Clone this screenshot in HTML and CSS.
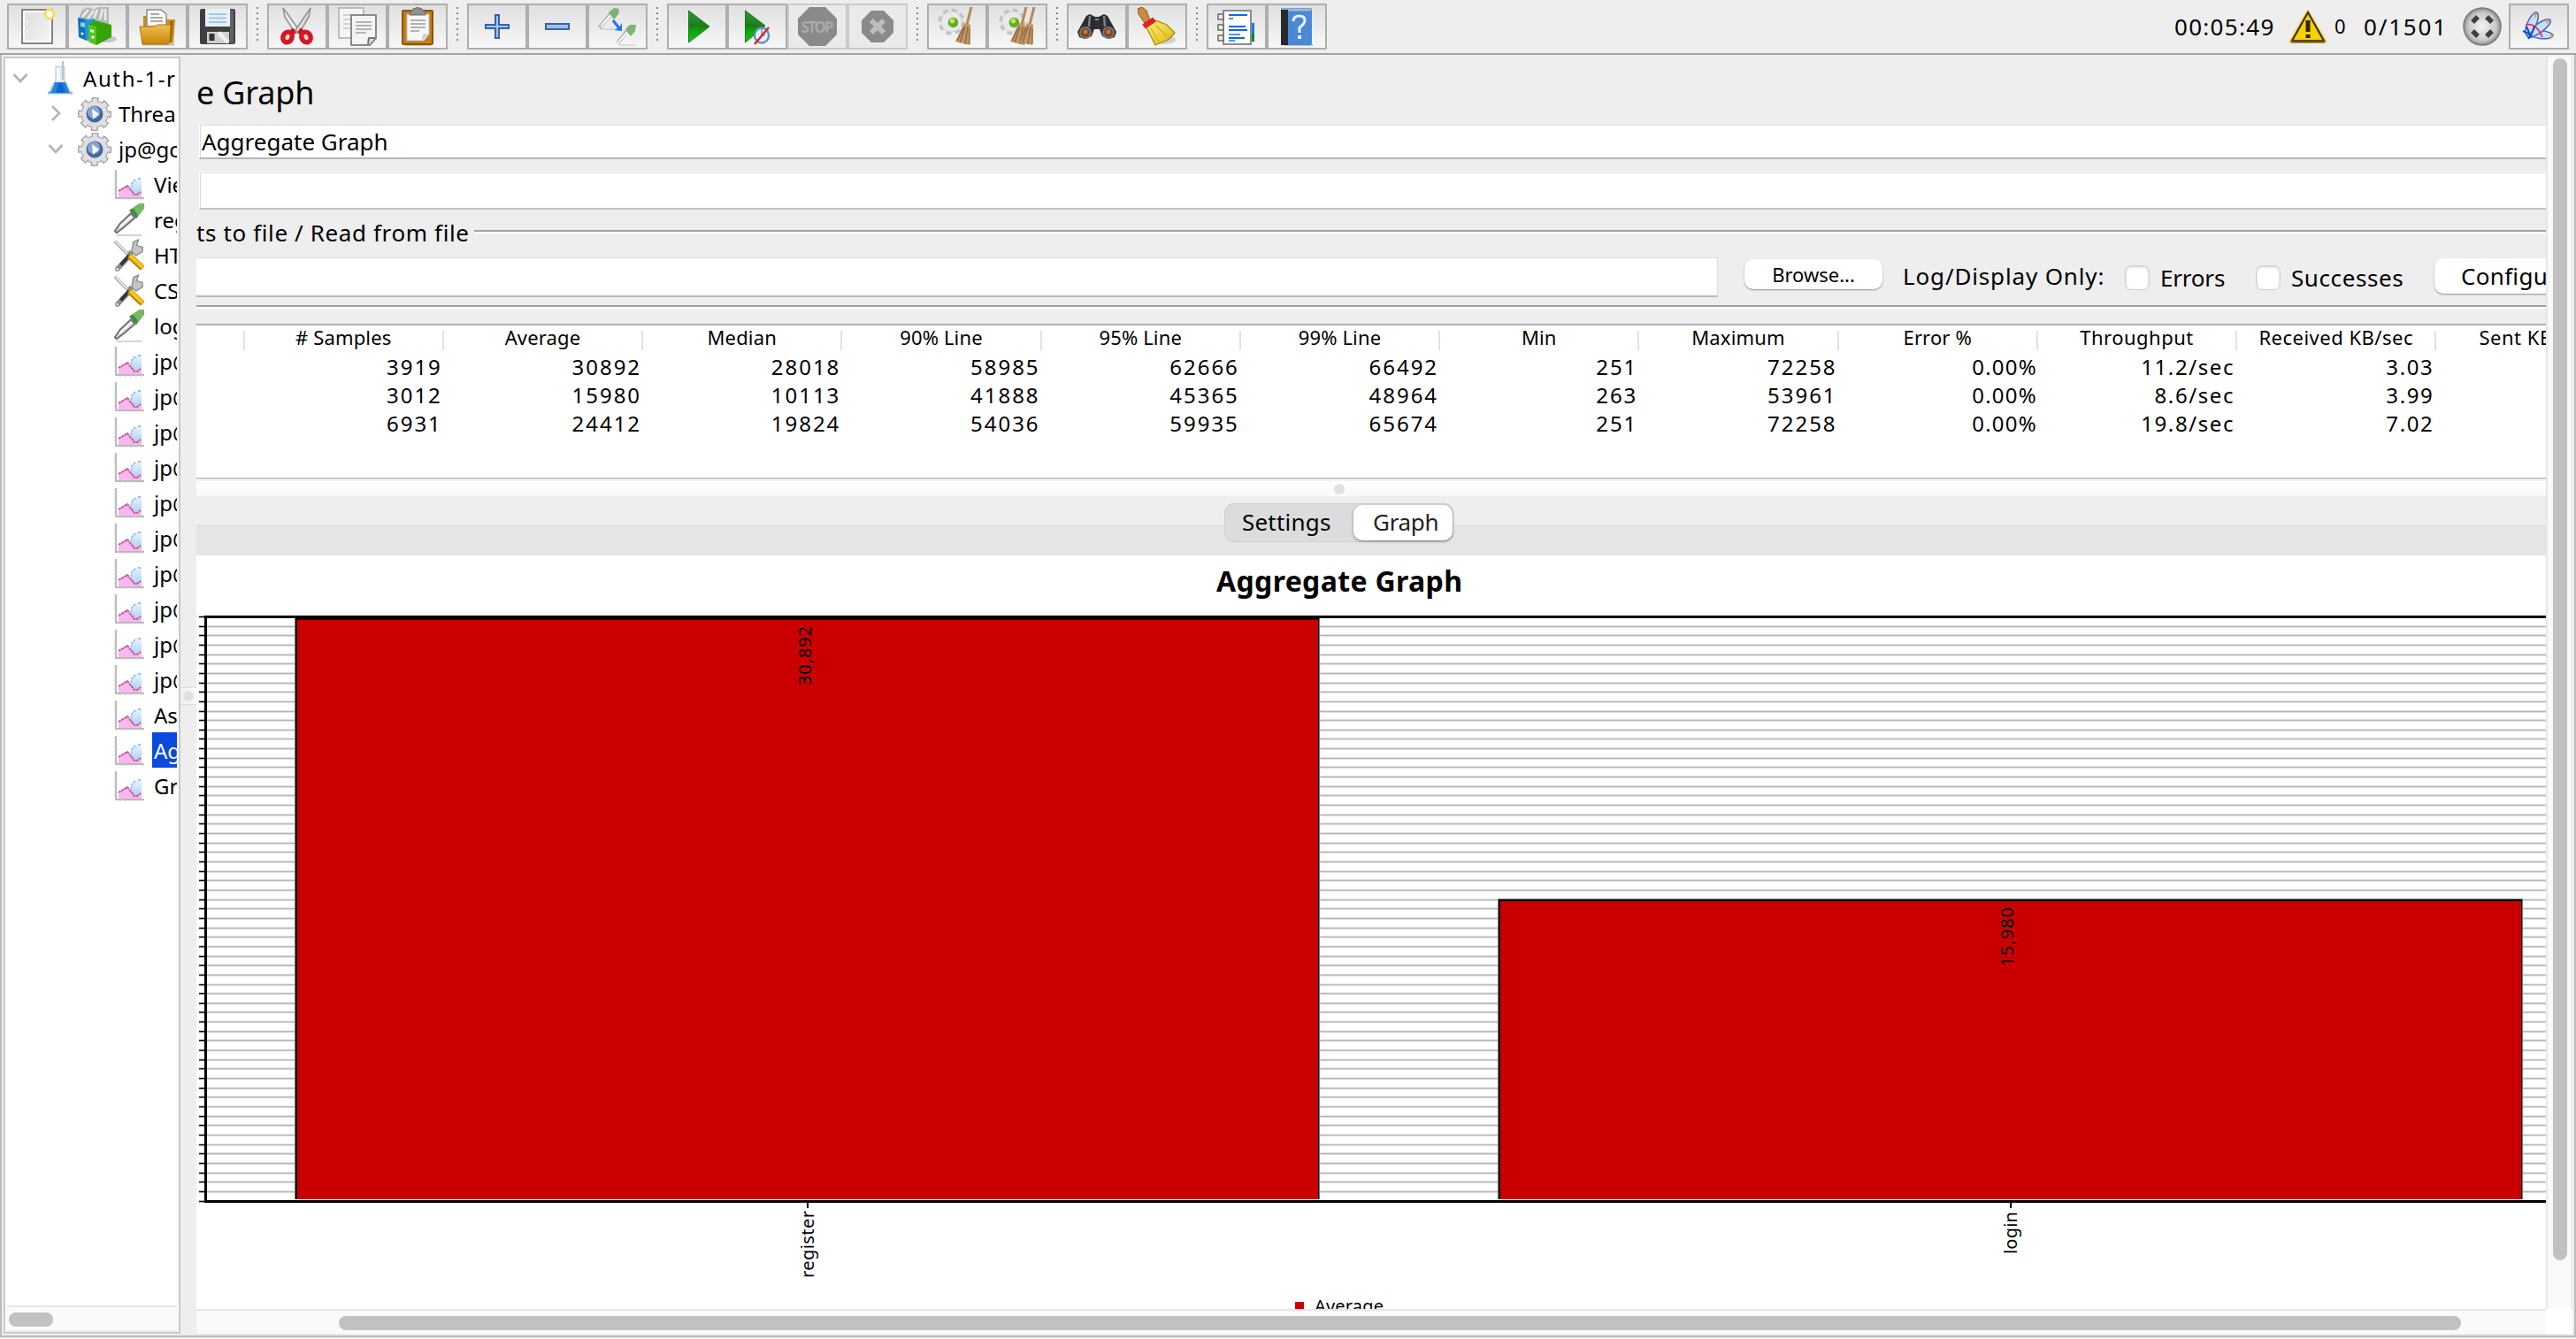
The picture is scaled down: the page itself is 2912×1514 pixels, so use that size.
FILE: index.html
```html
<!DOCTYPE html>
<html lang="en">
<head>
<meta charset="utf-8">
<title>Aggregate Graph</title>
<link rel="stylesheet" href="styles.css">
</head>
<body>
<svg class="defs" width="0" height="0">
  <defs>
    <linearGradient id="g-paper" x1="0" y1="0" x2="1" y2="1"><stop offset="0" stop-color="#dcdcdc"/><stop offset="1" stop-color="#f6f6f6"/></linearGradient>
    <linearGradient id="g-folder" x1="0" y1="0" x2="0" y2="1"><stop offset="0" stop-color="#eebf55"/><stop offset="1" stop-color="#c98606"/></linearGradient>
    <linearGradient id="g-play" x1="0" y1="0" x2="0" y2="1"><stop offset="0" stop-color="#2f9a2f"/><stop offset=".5" stop-color="#1c7a1c"/><stop offset=".55" stop-color="#0a9a0a"/><stop offset="1" stop-color="#12c812"/></linearGradient>
    <linearGradient id="g-broom" x1="0" y1="0" x2="1" y2="1"><stop offset="0" stop-color="#fff27a"/><stop offset="1" stop-color="#dcb60c"/></linearGradient>
    <linearGradient id="g-sky" x1="0" y1="0" x2="0" y2="1"><stop offset="0" stop-color="#eaf4ff"/><stop offset="1" stop-color="#a4ccf6"/></linearGradient>
    <radialGradient id="g-ball"><stop offset="0" stop-color="#f4f4f4"/><stop offset=".75" stop-color="#c9c9c9"/><stop offset="1" stop-color="#8d8d8d"/></radialGradient>
    <symbol id="i-chart" viewBox="0 0 36 36">
      <path d="M3 1V33H35" fill="none" stroke="#b9b9b9" stroke-width="2"/>
      <path d="M1 3H3M1 8H3M1 13H3M1 18H3M1 23H3M1 28H3M8 35V33M14 35V33M20 35V33M26 35V33M32 35V33" stroke="#d0d0d0" stroke-width="1.5"/>
      <path d="M32 11H26L22 14L20 20V26L27 31L32 27Z" fill="url(#g-sky)"/>
      <path d="M31 11H27M25 12L21 16L20 22" fill="none" stroke="#8fc0f5" stroke-width="1.8" stroke-dasharray="3 1"/>
      <path d="M6 32V25L16 18L24 29L27 28L32 26V32Z" fill="#f9b9ef"/>
      <path d="M6 25L16 19L24 29L27 29L31 26" fill="none" stroke="#c9588f" stroke-width="2" stroke-dasharray="3 .8"/>
    </symbol>
    <symbol id="i-dropper" viewBox="0 0 38 42">
      <path d="M4 39H34" stroke="#d2d2d2" stroke-width="2"/>
      <path d="M2 34L8 25L21 13L26 18L12 30L4 36Z" fill="#d6d6d6" stroke="#6e6e6e" stroke-width="2"/>
      <path d="M8 29L22 16" stroke="#fff" stroke-width="2"/>
      <path d="M19 9L31 1H37V7L28 19Z" fill="#79b866"/>
      <path d="M19 9L24 7L29 14L28 19Z" fill="#3f8a48"/>
    </symbol>
    <symbol id="i-tools" viewBox="0 0 38 40">
      <path d="M2 3L17 18" stroke="#b0b0b0" stroke-width="4"/><path d="M3 3L18 19" stroke="#f1f1f1" stroke-width="1.5"/>
      <path d="M5 36L18 22L22 15" fill="none" stroke="#8c8c8c" stroke-width="6"/><path d="M9 31L19 20" stroke="#333" stroke-width="4"/>
      <path d="M22 15L24 4L30 1L28 8L35 10V15L27 20Z" fill="#c4c4c4" stroke="#8f8f8f" stroke-width="1.5"/>
      <path d="M19 20L35 35" stroke="#b28000" stroke-width="7"/><path d="M20 20L35 34" stroke="#f8c515" stroke-width="4.500"/>
      <circle cx="5" cy="36" r="2" fill="#fff" stroke="#888" stroke-width="1.5"/>
    </symbol>
    <symbol id="i-gear" viewBox="0 0 38 38">
      <circle cx="19" cy="19" r="16" fill="none" stroke="#9d9d9d" stroke-width="6" stroke-dasharray="7.6 4.966" stroke-dashoffset="3.8"/>
      <circle cx="19" cy="19" r="15" fill="#dfdfdf" stroke="#b4b4b4" stroke-width="1.5"/>
      <circle cx="19" cy="19" r="15.500" fill="none" stroke="#e2e2e2" stroke-width="4.500" stroke-dasharray="5 7.174" stroke-dashoffset="2.5"/>
      <circle cx="19" cy="19" r="9.500" fill="#43679f"/><circle cx="18" cy="17" r="7" fill="#87a6d2"/>
      <path d="M16 13L24 19L17 25Z" fill="#f7faff"/>
    </symbol>
    <symbol id="i-flask" viewBox="0 0 30 40">
      <path d="M1 37H29" stroke="#a9b4bf" stroke-width="3"/>
      <path d="M10 7H20V22L26 36H4L10 22Z" fill="#dfe7ee" stroke="#c6ced5" stroke-width="1.200"/><path d="M18 1V22" stroke="#b9c1c8" stroke-width="2"/>
      <path d="M13 9V23" stroke="#fff" stroke-width="3"/>
      <path d="M9 25H21L26 37H3Z" fill="#2b82dc"/><path d="M13 26H18L21 37H10Z" fill="#0a69d2"/><path d="M7 28L4 35" stroke="#9fcbf4" stroke-width="2"/>
    </symbol>
    <symbol id="i-minibroom" viewBox="0 0 20 44">
      <path d="M18 0L13 20" stroke="#b58a57" stroke-width="3"/>
      <path d="M10 18L17 20L16 43L0 39Z" fill="#c29667"/>
      <path d="M11 22L5 40M14 22L11 42M9 23L2 38M16 24V42" stroke="#8a6238" stroke-width="1.2"/>
    </symbol>
    <symbol id="i-cog" viewBox="0 0 32 32">
      <circle cx="16" cy="16" r="12" fill="none" stroke="#c2c2c2" stroke-width="7" stroke-dasharray="5.4 4.02"/>
      <circle cx="16" cy="16" r="12" fill="#e9e9e9" stroke="#cfcfcf"/><circle cx="18" cy="17" r="6" fill="#68ad1d"/><circle cx="17" cy="15" r="3" fill="#b5e562"/>
    </symbol>
  </defs>
</svg>

<header class="toolbar">
  <div class="group">
    <button class="tool"><svg viewBox="0 0 44 44"><rect x="5" y="3" width="34" height="38" fill="url(#g-paper)" stroke="#85857e" stroke-width="2"/><path d="M7 5V39M7 5H37V39H7" fill="none" stroke="#fff" stroke-width="2"/><path d="M10 16h2v2h-2zM10 26h2v2h-2z" fill="#fff"/><circle cx="36" cy="8" r="5" fill="#fff" stroke="#f2e258" stroke-width="3"/></svg></button>
    <button class="tool"><svg viewBox="0 0 44 44"><ellipse cx="32" cy="36" rx="12" ry="4" fill="#c6c6c6"/><path d="M1 12L5 3L12 0L18 3L23 0H35L35 19L15 17Z" fill="#b4babc"/><path d="M5 11L12 3M11 13L18 4M18 13L22 3M25 14L28 2M31 15V2" stroke="#e9eded" stroke-width="2.500"/><path d="M0 12L10 14V38L1 34Z" fill="#0e72b4"/><path d="M7 15L19 13V37L9 38Z" fill="#1f97dd"/><path d="M3 17l5 1v5l-5-1z" fill="#8dd0f6"/><path d="M12 20L19 15L38 20V34L21 43L12 39Z" fill="#36a306"/><path d="M12 20L21 22V43L12 39Z" fill="#54c51c"/><path d="M14 25l4 1v3l-4-1z" fill="#eaffda"/><circle cx="17" cy="34" r="1.8" fill="#fff"/><circle cx="5" cy="30" r="1.5" fill="#fff"/></svg></button>
    <button class="tool"><svg viewBox="0 0 44 44"><path d="M5 42H41" stroke="#bdbdbd" stroke-width="3"/><path d="M6 22V10H12V14H36L42 14L40 40L34 41Z" fill="#c98b1c"/><path d="M38 16L36 40" stroke="#9b6206" stroke-width="3"/><path d="M10 22V3H26L32 8V22Z" fill="#fafafa" stroke="#888f8f" stroke-width="1.5"/><path d="M14 8H24M14 12H28M14 16H28" stroke="#a9a9a9" stroke-width="2"/><path d="M2 22H18L22 20H37L36 40L33 42H5Z" fill="url(#g-folder)" stroke="#b47604"/></svg></button>
    <button class="tool"><svg viewBox="0 0 44 44"><rect x="2" y="2" width="40" height="40" rx="2" fill="#3f3f41"/><path d="M38 3V41" stroke="#626264" stroke-width="4"/><rect x="8" y="2" width="28" height="20" fill="#e6f0fa"/><path d="M12 8H32M12 12.500H32M12 17H32" stroke="#a9c5e0" stroke-width="2"/><rect x="10" y="28" width="25" height="13" fill="#cfcfcf"/><path d="M23 29L34 40" stroke="#eee" stroke-width="5"/><rect x="12.500" y="30" width="6" height="8" fill="#333"/></svg></button>
  </div>
  <i class="sep"></i>
  <div class="group">
    <button class="tool"><svg viewBox="0 0 44 44"><path d="M6 1L8 11L20 30L24 26Z" fill="#f0f0f0" stroke="#999" stroke-width="1.800"/><path d="M37 1L35 11L24 30L20 26Z" fill="#dedede" stroke="#999" stroke-width="1.800"/><path d="M19 26L15 29M24 26L28 29" stroke="#d40f18" stroke-width="6"/><ellipse cx="11" cy="34" rx="5" ry="6" transform="rotate(25 11 34)" fill="#f3dede" stroke="#d51720" stroke-width="5.500"/><ellipse cx="32" cy="34" rx="5" ry="6" transform="rotate(-25 32 34)" fill="#f3dede" stroke="#d51720" stroke-width="5.500"/></svg></button>
    <button class="tool"><svg viewBox="0 0 44 44"><rect x="1" y="1" width="28" height="34" fill="#f4f4f4" stroke="#bcbcbc" stroke-width="2"/><path d="M6 9H20M6 14H20M6 19H20M6 24H20" stroke="#d2d2d2" stroke-width="2"/><path d="M15 9H43V35L36 43H15Z" fill="#f4f4f4" stroke="#8a8a88" stroke-width="2"/><path d="M20 17H38M20 21H38M20 25H38M20 29H32" stroke="#b5b5b5" stroke-width="1.800"/><path d="M34 42L35 35H42" fill="#ddd" stroke="#777" stroke-width="2"/></svg></button>
    <button class="tool"><svg viewBox="0 0 44 44"><path d="M8 43H37" stroke="#c5c5c5" stroke-width="3"/><rect x="5" y="4" width="34" height="38" rx="1" fill="#c07d1c" stroke="#8a550b" stroke-width="2"/><path d="M10 8H35V31L29 38H10Z" fill="#f7f7f7" stroke="#bbb"/><path d="M14 15H31M14 19H31M14 23H31M14 27H24" stroke="#b2b2b2" stroke-width="1.800"/><path d="M27 38L28 31L35 30Z" fill="#ccc"/><path d="M13 7L17 2Q22-1 27 2L31 7V9H13Z" fill="#90908b" stroke="#6a6a66"/></svg></button>
  </div>
  <i class="sep"></i>
  <div class="group">
    <button class="tool"><svg viewBox="0 0 44 44"><path d="M20 9H24V20H35V24H24V35H20V24H9V20H20Z" fill="#a5c4e8" stroke="#3465a8" stroke-width="2"/></svg></button>
    <button class="tool"><svg viewBox="0 0 44 44"><rect x="9" y="19" width="26" height="6" fill="#9dbfe6" stroke="#3465a8" stroke-width="2"/></svg></button>
    <button class="tool"><svg viewBox="0 0 44 44"><path d="M2 25H18M24 43H42" stroke="#c0c0c0"/><path d="M2 23L14 8" stroke="#a3a6ab" stroke-width="4"/><path d="M3 22L14 9" stroke="#fff" stroke-width="2"/><path d="M12 6L18 1L24 2L23 8L18 14Z" fill="#7fb273"/><path d="M22 41L33 27" stroke="#a3a6ab" stroke-width="4"/><path d="M22 41L33 28" stroke="#fff" stroke-width="2"/><path d="M31 25L36 20L43 20L42 27L37 33Z" fill="#7fb273"/><path d="M17 15L24 24" stroke="#1c74f4" stroke-width="3"/><path d="M18 26L27 27V18L24 23Z" fill="#1c74f4"/></svg></button>
  </div>
  <i class="sep"></i>
  <div class="group">
    <button class="tool"><svg viewBox="0 0 44 44"><path d="M12.500 4L36 22L12.500 40Z" fill="url(#g-play)" stroke="#1b7a1b"/></svg></button>
    <button class="tool"><svg viewBox="0 0 44 44"><path d="M8.500 4L31 21L8.500 40Z" fill="url(#g-play)" stroke="#1b7a1b"/><ellipse cx="27" cy="32" rx="8" ry="8.500" fill="#eef3fa" stroke="#5f92c6" stroke-width="2.500"/><path d="M27 25V32H31" fill="none" stroke="#86a9d0" stroke-width="2"/><path d="M19 42L35 23" stroke="#d8242c" stroke-width="2.500"/></svg></button>
    <button class="tool off"><svg viewBox="0 0 44 44"><path d="M13 0H31L44 13V31L31 44H13L0 31V13Z" fill="#8a8a8a"/><text class="stop" x="22" y="28.500" textLength="37">STOP</text></svg></button>
    <button class="tool off"><svg viewBox="0 0 44 44"><path d="M15 4H29L40 15V29L29 40H15L4 29V15Z" fill="#8a8a8a"/><path d="M15 15L29 29M29 15L15 29" stroke="#bdbdbd" stroke-width="6"/></svg></button>
  </div>
  <i class="sep"></i>
  <div class="group">
    <button class="tool"><svg viewBox="0 0 44 44"><use href="#i-cog" x="0" y="1" width="31" height="31"/><use href="#i-minibroom" x="20" y="0" width="20" height="44"/><use href="#i-minibroom" x="14" y="16" width="20" height="28" opacity="0"/></svg></button>
    <button class="tool"><svg viewBox="0 0 44 44"><use href="#i-cog" x="1" y="1" width="31" height="31"/><use href="#i-minibroom" x="14" y="0" width="20" height="44"/><use href="#i-minibroom" x="23" y="0" width="20" height="44"/></svg></button>
  </div>
  <i class="sep"></i>
  <div class="group">
    <button class="tool"><svg viewBox="0 0 44 44"><path d="M10 10L14 8L20 11H24L30 8L34 10L44 28L42 34L36 36L28 33L25 25H19L16 33L8 36L2 34L0 28Z" fill="#2c2d30"/><path d="M14 10L13 22M30 10L31 22M20 14H24" stroke="#7e8084" stroke-width="2.500"/><circle cx="9" cy="29" r="6" fill="#7c4826" stroke="#777" stroke-width="2"/><circle cx="35" cy="29" r="6" fill="#7c4826" stroke="#777" stroke-width="2"/><circle cx="9" cy="28" r="2.500" fill="#bd7846"/><circle cx="35" cy="28" r="2.500" fill="#bd7846"/></svg></button>
    <button class="tool"><svg viewBox="0 0 44 44"><ellipse cx="30" cy="37" rx="13" ry="5" fill="#d0d0cc"/><path d="M0 2L5 0L10 4L14 15L8 18L1 8Z" fill="#c78a3e" stroke="#8a5a20"/><path d="M8 19L20 15L33 20L42 29L36 36L20 43Z" fill="url(#g-broom)" stroke="#a98a05" stroke-width="1.300"/><path d="M15 24L24 40M20 20L35 35" stroke="#d0b020" stroke-width="1.200"/><path d="M7 22L19 14" stroke="#dc1f22" stroke-width="6"/></svg></button>
  </div>
  <i class="sep"></i>
  <div class="group">
    <button class="tool"><svg viewBox="0 0 44 44"><rect x="38" y="18" width="4" height="12" fill="#1e78f0"/><rect x="38" y="30" width="4" height="9" fill="#0d8a13"/><rect x="7" y="4" width="31" height="38" fill="#fff" stroke="#8d8d8d" stroke-width="2"/><path d="M13 9H34M13 22H32M13 26H34M13 35H31" stroke="#1266e6" stroke-width="2.200"/><path d="M13 13H18M13 31H26M13 38H20" stroke="#4e96fa" stroke-width="2"/><path d="M1 8H7V14H1ZM1 20H7V26H1ZM1 32H7V38H1Z" fill="#eee" stroke="#6a6a6a" stroke-width="1.500"/></svg></button>
    <button class="tool"><svg viewBox="0 0 44 44"><path d="M8 43H40" stroke="#c2c2c2" stroke-width="2"/><rect x="4" y="1" width="35" height="42" rx="2" fill="#4b88d6"/><path d="M5 3H38" stroke="#a9b9cc" stroke-width="3"/><rect x="4" y="3" width="8" height="40" fill="#252a31"/><path d="M18 16Q18 10 25 10Q31 10 31 15Q31 19 25 23V29" fill="none" stroke="#e7f1fc" stroke-width="3"/><rect x="23" y="32" width="4" height="4" fill="#e7f1fc"/></svg></button>
  </div>
  <div class="status">
    <span class="clock">00:05:49</span>
    <svg class="warn" viewBox="0 0 44 38"><path d="M22 2L42 36H2Z" fill="#f6cf05" stroke="#f1df81" stroke-width="4" stroke-linejoin="round"/><path d="M22 3L40 35H4Z" fill="#f6cf05" stroke="#3f3508" stroke-width="2.200"/><path d="M3 36H41" stroke="#6e570a" stroke-width="3"/><path d="M22 12V25M22 28V32" stroke="#2c2605" stroke-width="5"/></svg>
    <span class="errs">0</span>
    <span class="threads">0/1501</span>
    <svg class="ball" viewBox="0 0 44 44"><circle cx="22" cy="22" r="21" fill="url(#g-ball)" stroke="#7b7b7b" stroke-width="1.500"/><path d="M11 17L17 11M27 11L33 17M33 27L27 33M17 33L11 27" stroke="#3f3f3f" stroke-width="5.500"/></svg>
    <button class="tool"><svg viewBox="0 0 44 44"><g stroke="#3a68cc" stroke-width="1.500" fill="#c9def8"><ellipse cx="24" cy="31" rx="14" ry="4.500" transform="rotate(6 24 31)"/><ellipse cx="22" cy="24" rx="16" ry="5" transform="rotate(-36 22 24)"/><ellipse cx="14" cy="19" rx="14" ry="5" transform="rotate(-66 14 19)"/></g><path d="M16 7L20 7L18 13ZM31 14L35 15L30 19ZM35 30L39 33L35 35Z" fill="#f29a2e"/><path d="M7 20Q19 17 26 34" fill="none" stroke="#e03a5a" stroke-width="1.800"/><path d="M4 27L13 31L10 36M8 22L13 33L17 21" fill="none" stroke="#1c4cc0" stroke-width="2"/></svg></button>
  </div>
</header>

<main class="work">
  <nav class="tree">
    <ul class="rows">
      <li class="node root"><svg class="arrow" viewBox="0 0 20 20"><path d="M2.500 6L10 14L17.500 6"/></svg><svg class="ic flask"><use href="#i-flask"/></svg><span class="dash">Auth-1-r</span></li>
      <li class="node group-node"><svg class="arrow" viewBox="0 0 20 20"><path d="M6 2L14 10L6 18"/></svg><svg class="ic gear"><use href="#i-gear"/></svg><span>Threa</span></li>
      <li class="node group-node"><svg class="arrow" viewBox="0 0 20 20"><path d="M2.500 6L10 14L17.500 6"/></svg><svg class="ic gear"><use href="#i-gear"/></svg><span>jp@gc</span></li>
      <li class="node leaf"><svg class="ic"><use href="#i-chart"/></svg><span>Vie</span></li>
      <li class="node leaf"><svg class="ic tall"><use href="#i-dropper"/></svg><span>reg</span></li>
      <li class="node leaf"><svg class="ic tall"><use href="#i-tools"/></svg><span>HT</span></li>
      <li class="node leaf"><svg class="ic tall"><use href="#i-tools"/></svg><span>CS</span></li>
      <li class="node leaf"><svg class="ic tall"><use href="#i-dropper"/></svg><span>log</span></li>
      <li class="node leaf"><svg class="ic"><use href="#i-chart"/></svg><span>jp@</span></li>
      <li class="node leaf"><svg class="ic"><use href="#i-chart"/></svg><span>jp@</span></li>
      <li class="node leaf"><svg class="ic"><use href="#i-chart"/></svg><span>jp@</span></li>
      <li class="node leaf"><svg class="ic"><use href="#i-chart"/></svg><span>jp@</span></li>
      <li class="node leaf"><svg class="ic"><use href="#i-chart"/></svg><span>jp@</span></li>
      <li class="node leaf"><svg class="ic"><use href="#i-chart"/></svg><span>jp@</span></li>
      <li class="node leaf"><svg class="ic"><use href="#i-chart"/></svg><span>jp@</span></li>
      <li class="node leaf"><svg class="ic"><use href="#i-chart"/></svg><span>jp@</span></li>
      <li class="node leaf"><svg class="ic"><use href="#i-chart"/></svg><span>jp@</span></li>
      <li class="node leaf"><svg class="ic"><use href="#i-chart"/></svg><span>jp@</span></li>
      <li class="node leaf"><svg class="ic"><use href="#i-chart"/></svg><span>As</span></li>
      <li class="node leaf selected"><svg class="ic"><use href="#i-chart"/></svg><span>Ag</span></li>
      <li class="node leaf"><svg class="ic"><use href="#i-chart"/></svg><span>Gr</span></li>
    </ul>
    <div class="hscroll"><i class="thumb"></i></div>
  </nav>

  <div class="splitter"><i class="grip"></i></div>

  <section class="view">
    <h1 class="heading">e Graph</h1>
    <div class="field name">Aggregate Graph</div>
    <div class="field comment"></div>
    <div class="legend-line"><span>ts to file / Read from file</span></div>
    <div class="file-row">
      <div class="path"></div>
      <button class="btn browse">Browse...</button>
      <span class="only">Log/Display Only:</span>
      <i class="check"></i><span class="errors">Errors</span>
      <i class="check"></i><span class="successes">Successes</span>
      <button class="btn configure">Configure</button>
    </div>
    <div class="stats">
      <div class="cols head"><span></span><span># Samples</span><span>Average</span><span>Median</span><span>90% Line</span><span>95% Line</span><span>99% Line</span><span>Min</span><span>Maximum</span><span>Error %</span><span class="wide">Throughput</span><span class="wide">Received KB/sec</span><span class="wide">Sent KB/sec</span></div>
      <div class="cols"><span></span><span>3919</span><span>30892</span><span>28018</span><span>58985</span><span>62666</span><span>66492</span><span>251</span><span>72258</span><span class="pct">0.00%</span><span class="rate">11.2/sec</span><span class="rate">3.03</span></div>
      <div class="cols"><span></span><span>3012</span><span>15980</span><span>10113</span><span>41888</span><span>45365</span><span>48964</span><span>263</span><span>53961</span><span class="pct">0.00%</span><span class="rate">8.6/sec</span><span class="rate">3.99</span></div>
      <div class="cols"><span></span><span>6931</span><span>24412</span><span>19824</span><span>54036</span><span>59935</span><span>65674</span><span>251</span><span>72258</span><span class="pct">0.00%</span><span class="rate">19.8/sec</span><span class="rate">7.02</span></div>
    </div>
    <div class="hsplit"><i class="grip"></i></div>
    <div class="tabbar">
      <div class="tabs"><span class="tab">Settings</span><span class="tab on">Graph</span></div>
    </div>
    <svg class="chart" viewBox="222 628 2656 852" width="2656" height="852">
      <text class="chart-title" x="1375" y="669" textLength="278">Aggregate Graph</text>
      <g id="grid" shape-rendering="crispEdges"></g>
      <g shape-rendering="crispEdges">
        <rect x="333" y="697" width="1159" height="659" fill="#777"/><rect x="334" y="697" width="1157" height="659"/><rect x="336" y="701" width="1154" height="655" fill="#ca0000"/>
        <rect x="1693" y="1016" width="1159" height="340" fill="#777"/><rect x="1694" y="1017" width="1157" height="339"/><rect x="1696" y="1019" width="1154" height="337" fill="#ca0000"/>
        <rect x="231" y="696" width="2647" height="3"/>
        <rect x="231" y="696" width="3" height="664"/>
        <rect x="234" y="1356" width="2644" height="1" fill="#fff"/>
        <rect x="231" y="1357" width="2647" height="3"/>
        <rect x="912" y="1360" width="2" height="6"/><rect x="2272" y="1360" width="2" height="6"/>
      </g>
      <text class="label" transform="translate(917 775) rotate(-90)" textLength="67">30,892</text>
      <text class="label" transform="translate(2276 1093) rotate(-90)" textLength="67">15,980</text>
      <text class="label" transform="translate(920 1445) rotate(-90)" textLength="76">register</text>
      <text class="label" transform="translate(2280 1418) rotate(-90)" textLength="48">login</text>
      <rect x="1464" y="1472" width="10" height="10" fill="#ca0000"/>
      <text class="label" x="1486" y="1484" textLength="78">Average</text>
    </svg>
    <div class="hscroll"><i class="thumb"></i></div>
  </section>

  <div class="vscroll"><i class="thumb"></i></div>
</main>
<script src="chart.js"></script>
</body>
</html>
```
FILE: chart.js
```js
// Horizontal grid lines and axis ticks, snapped to whole pixels.
const grid = document.getElementById("grid");
const intervals = 62;
const step = 10.654;
const top0 = 697;

function bar(x, y, width, height, fill) {
  const r = document.createElementNS("http://www.w3.org/2000/svg", "rect");
  r.setAttribute("x", x);
  r.setAttribute("y", y);
  r.setAttribute("width", width);
  r.setAttribute("height", height);
  r.setAttribute("fill", fill);
  grid.appendChild(r);
}

for (let i = 0; i <= intervals; i++) {
  const y = top0 + Math.floor(i * step + 0.495);
  bar(234, y - 1, 2644, 3, "#dedede");
  bar(234, y, 2644, 1, "#b8b8b8");
  bar(225, y - 1, 6, 3, "#b0b0b0");
  bar(225, y, 6, 1, "#000");
}
```
FILE: styles.css
```css
* { box-sizing: border-box; }
html, body { margin: 0; height: 100%; overflow: hidden; }
body {
  width: 2912px; height: 1514px; background: #eee; color: #000;
  font: 26px "Noto Sans", "Open Sans", sans-serif;
  display: flex; flex-direction: column;
}
.defs { position: absolute; }
svg { display: block; }
ul, h1 { margin: 0; padding: 0; }
span { white-space: nowrap; }

/* toolbar */
.toolbar { flex: none; height: 62px; padding: 4px 8px 0; display: flex; align-items: flex-start; border-bottom: 2px solid #a4a4a4; }
.group { display: flex; }
.tool { width: 68px; height: 52px; margin: 0; padding: 2px 10px; border: 2px solid #aeaeae; background: linear-gradient(#e0e0e0, #f7f7f7); }
.tool svg { width: 44px; height: 44px; }
.tool.off { border-color: #cbcbcb; background: #eaeaea; }
.stop { font: bold 17px "Noto Sans", sans-serif; text-anchor: middle; fill: #a9a9a9; }
.sep { width: 2px; height: 38px; margin: 4px 10px 0; background: repeating-linear-gradient(#888 0 2px, transparent 2px 6px); }
.status { margin-left: auto; display: flex; line-height: 36px; }
.clock { width: 129px; padding-top: 8px; letter-spacing: 1.3px; }
.warn { width: 44px; height: 38px; margin: 7px 8px 0 0; }
.errs { width: 33px; font-size: 22px; padding-top: 7px; }
.threads { width: 112px; padding-top: 8px; letter-spacing: 1.8px; }
.ball { width: 44px; height: 44px; margin: 4px 8px 0 0; }

/* workspace */
.work { flex: none; height: 1450px; display: flex; border: solid #bbb; border-width: 0 2px 2px; }
.tree { flex: none; width: 200px; height: 1444px; margin: 2px 0 0 2px; padding: 0 2px; border: 2px solid #c9c9c9; background: #fff; display: flex; flex-direction: column; }
.rows { flex: 1; list-style: none; padding-top: 2px; overflow: hidden; }
.node { height: 40px; display: flex; align-items: center; font-size: 24px; line-height: 40px; overflow: hidden; }
.node span { height: 40px; line-height: 42px; }
.arrow { flex: none; width: 20px; height: 20px; fill: none; stroke: #b4b4b4; stroke-width: 2.6; }
.root { padding-left: 5px; }
.group-node { padding-left: 45px; }
.leaf { padding-left: 120px; }
.ic { flex: none; width: 36px; height: 36px; margin-top: 2px; }
.tall { height: 40px; }
.flask { width: 30px; height: 40px; margin: 0 11px 0 20px; }
.gear { width: 38px; height: 38px; margin: 2px 8px 0 15px; }
.dash { letter-spacing: 1.6px; }
.leaf span { margin-left: 8px; padding-left: 2px; }
.selected span { background: #0a4bdd; color: #fff; flex: 1; }
.hscroll { flex: none; height: 30px; border-top: 2px solid #e7e7e7; border-bottom: 2px solid #ebebeb; background: #fafafa; padding: 6px 0 0 2px; }
.thumb { display: block; background: #c1c1c1; border-radius: 8px; }
.tree .thumb { width: 50px; height: 16px; }
.splitter { flex: none; width: 18px; padding-top: 715px; }
.splitter .grip { display: flex; align-items: center; justify-content: center; height: 20px; border: solid #ddd; border-width: 1px 0; background: linear-gradient(90deg, #f0f0f0, #fafafa); }
.grip::after { content: ""; width: 12px; height: 12px; border-radius: 50%; background: #e1e1e1; }

.view { flex: none; width: 2656px; display: flex; flex-direction: column; overflow: hidden; }
.heading { flex: none; height: 79px; padding-top: 18px; font-size: 36px; font-weight: 400; line-height: 50px; letter-spacing: -.2px; }
.field { flex: none; margin-left: 3px; border: 1px solid #fff; border-right: 0; background: #fff; box-shadow: inset 1px 1px #dcdcdc; }
.name { height: 39px; padding: 0 0 0 2px; line-height: 39px; border-bottom: 2px solid #b6b6b6; border-top: 0; }
.comment { height: 43px; margin-top: 14px; border-bottom: 2px solid #c3c3c3; }
.legend-line { flex: none; height: 48px; display: flex; align-items: center; padding-top: 2px; letter-spacing: .62px; }
.legend-line span { line-height: 40px; padding-top: 2px; }
.legend-line::after { content: ""; flex: 1; height: 4px; margin-left: 5px; background: linear-gradient(#a0a0a0 50%, #fff 50%); }
.file-row { flex: none; height: 64px; padding-top: 6px; display: flex; align-items: flex-start; border-bottom: 2px solid #fff; box-shadow: inset 0 -2px #a0a0a0; line-height: 36px; }
.file-row > * { flex: none; }
.path { width: 1720px; height: 45px; background: #fff; border: solid #dcdcdc; border-width: 1px 1px 2px 0; border-bottom-color: #b8b8b8; }
.btn { margin: 0; padding: 0; border: 0; border-radius: 10px; background: #fff; box-shadow: 0 1px 2px #0006; font-family: inherit; color: #000; }
.browse { width: 156px; height: 34px; margin: 2px 23px 0 30px; font-size: 22px; line-height: 30px; }
.only { width: 251px; padding-top: 8px; line-height: 26px; letter-spacing: .85px; }
.check { width: 28px; height: 28px; margin: 9px 12px 0 0; border: 1px solid #cfcfcf; border-radius: 7px; background: #fff; box-shadow: inset 0 1px 3px #0003; }
.errors { width: 108px; padding-top: 5px; letter-spacing: -.2px; }
.successes { width: 162px; padding-top: 5px; letter-spacing: .6px; }
.configure { width: 170px; height: 40px; margin-top: 1px; padding: 0 30px; text-align: left; font-size: 26px; line-height: 36px; letter-spacing: .3px; }

/* statistics table */
.stats { flex: none; height: 193px; background: #fff; border-bottom: 2px solid #c8c8c8; }
.stats::before { content: ""; display: block; height: 17px; background: #eee; border-bottom: 2px solid #b0b0b0; }
.cols { display: grid; grid-template-columns: 54.6px repeat(12, 225.25px); height: 32px; font-size: 24px; line-height: 32px; letter-spacing: 2px; text-align: right; }
.cols span { padding-right: 2px; }
.cols .pct { letter-spacing: 1.2px; padding-right: 1px; }
.cols .rate { letter-spacing: 1.6px; padding-right: 3px; }
.cols.head { height: 31px; font-size: 22px; letter-spacing: .15px; text-align: center; }
.cols.head span { height: 22px; margin-top: 6px; padding: 0; line-height: 15px; border-right: 2px solid #e2e2e2; }
.cols.head .wide { letter-spacing: .5px; }

.hsplit { flex: none; height: 19px; padding-top: 1px; background: #fff; }
.hsplit .grip { display: flex; align-items: center; justify-content: center; height: 18px; padding-right: 72px; border-top: 1px solid #f0f0f0; background: linear-gradient(#fff, #f9f9f9); }
.tabbar { flex: none; height: 67px; display: flex; justify-content: center; align-items: flex-start; padding: 8px 73px 0 0; background: linear-gradient(#eee 33px, #d8d8d8 33px 34px, #e5e5e5 34px); }
.tabs { display: flex; width: 259px; height: 44px; padding: 2px 1px 2px 0; border-radius: 11px; background: #dcdcdc; box-shadow: inset 0 0 0 1px #d1d1d1; line-height: 38px; }
.tab { width: 146px; padding-left: 20px; letter-spacing: .2px; }
.on { width: 112px; height: 40px; border-radius: 10px; background: #fff; box-shadow: 0 1px 3px #0007; letter-spacing: -.3px; padding-left: 22px; line-height: 39px; color: #222; }

/* chart */
.chart { flex: none; background: #fff; font-family: "Noto Sans", "Open Sans", sans-serif; }
.chart-title { font-size: 32px; font-weight: 700; }
.label { font-size: 20px; }
.view .thumb { width: 2399px; height: 16px; margin-left: 159px; }

.vscroll { flex: none; width: 30px; height: 1418px; margin-top: 2px; border-left: 2px solid #e7e7e7; border-right: 2px solid #ebebeb; background: #fafafa; padding: 2px 4px 0 6px; }
.vscroll .thumb { width: 16px; height: 1359px; }
.vscroll::after { content: ""; display: block; height: 28px; width: 30px; margin: 55px 0 0 -8px; background: #fff; }
```
